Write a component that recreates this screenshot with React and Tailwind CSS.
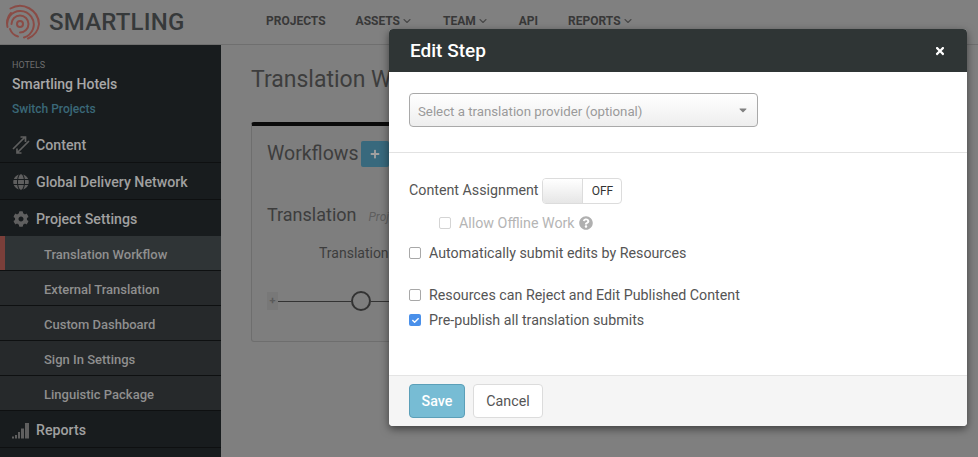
import React from 'react';
import { ChevronDown } from 'lucide-react';
import { FaCog, FaGlobe, FaQuestionCircle, FaTimes, FaCheck, FaPlus, FaCaretDown } from 'react-icons/fa';

const font = { fontFamily: 'Roboto, "Liberation Sans", sans-serif' };

function Logo() {
  return (
    <svg width="38" height="38" viewBox="5 3 38 38" fill="none" stroke="#8a4c46" strokeWidth="2" strokeLinecap="round">
      <circle cx="20" cy="24" r="3" />
      <path d="M11.500 24A8.500 8.500 0 1 1 20 32.500" />
      <path d="M7.500 27A13 13 0 0 1 20 11A13.500 13.500 0 0 1 33 29A14 14 0 0 1 24 37.500" />
      <path d="M10 29A12 12 0 0 0 18 36.500" />
      <path d="M10.500 8.500A19 19 0 0 1 39 24A18 18 0 0 1 28 38.500" />
      <path d="M7 23A16 16 0 0 1 11 13" />
    </svg>
  );
}

function TransferIcon() {
  return (
    <svg width="18" height="18" viewBox="0 0 18 18" fill="none" stroke="#5f5f5f" strokeWidth="1.700">
      <path d="M1 13 L13 1 M8.500 1 H13.500 V6" />
      <path d="M17 5 L5 17 M5 12.500 V17 H9.500" />
    </svg>
  );
}

function BarsIcon() {
  return (
    <svg width="18" height="17" viewBox="0 0 18 17" fill="#5f5f5f">
      <rect x="0" y="14.500" width="2" height="2" />
      <rect x="3" y="13" width="2" height="3.500" />
      <rect x="6" y="10" width="2" height="6.500" />
      <rect x="9" y="6.500" width="3" height="10" />
      <rect x="13" y="1" width="4" height="15.500" />
    </svg>
  );
}

function NavItem({ label, chevron }) {
  return (
    <div className="flex items-center gap-[1px] text-[12px] font-bold text-[#383838]">
      {label}
      {chevron && <ChevronDown size={12} strokeWidth={2.200} className="text-[#484848]" />}
    </div>
  );
}

function MainRow({ icon, label, h }) {
  return (
    <div className={`flex items-center pl-[12px] gap-[6px] border-b border-[#0e1011] text-[14.200px] font-medium text-[#a0a0a0] ${h}`}>
      <div className="w-[18px] flex justify-center">{icon}</div>
      <span className="pt-[2px]">{label}</span>
    </div>
  );
}

function SubRow({ label, active }) {
  return (
    <div className={`flex items-center h-[35px] pl-[44px] pt-[3px] border-b border-[#0e1011] text-[13px] font-medium text-[#8f8f8f] relative ${active ? 'bg-[#2f3436]' : 'bg-[#26292b]'}`}>
      {active && <div className="absolute left-0 top-0 bottom-0 w-[5px] bg-[#7b3f3a]" />}
      {label}
    </div>
  );
}

function Check({ checked, disabled }) {
  if (checked) {
    return (
      <span className="w-[12px] h-[12px] rounded-[2px] bg-[#4a90ea] flex items-center justify-center">
        <FaCheck size={7} className="text-white" />
      </span>
    );
  }
  return (
    <span className={`w-[12px] h-[12px] rounded-[2px] border bg-white ${disabled ? 'border-[#d4d4d4]' : 'border-[#a8a8a8]'}`} />
  );
}

function CheckRow({ label, checked, className }) {
  return (
    <div className={`flex items-center gap-[8px] text-[14.250px] text-[#555] h-[20px] ${className || ''}`}>
      <Check checked={checked} />
      <span className="pt-[2px]">{label}</span>
    </div>
  );
}

export default function App() {
  return (
    <div className="relative w-[978px] h-[457px] overflow-hidden bg-[#7f7f7f]" style={font}>
      <header className="h-[45px] flex items-center bg-[#808080] border-b border-[#6f6f6f]">
        <div className="w-[266px] flex items-center pl-[5px] gap-[6px]">
          <Logo />
          <span className="text-[24px] font-medium tracking-[0.2px] text-[#36393a]">SMARTLING</span>
        </div>
        <nav className="flex items-center gap-[30px] pb-[3px]">
          <NavItem label="PROJECTS" />
          <NavItem label="ASSETS" chevron />
          <NavItem label="TEAM" chevron />
          <NavItem label="API" />
          <NavItem label="REPORTS" chevron />
        </nav>
      </header>

      <div className="flex h-[412px]">
        <aside className="w-[221px] shrink-0 bg-[#181c1e]">
          <div className="h-[83px] pl-[12px] pt-[15px]">
            <div className="text-[9px] leading-[11px] text-[#6e6e6e]">HOTELS</div>
            <div className="text-[14px] leading-[20px] mt-[3px] font-medium text-[#a8a8a8]">Smartling Hotels</div>
            <div className="text-[12px] leading-[16px] mt-[7px] font-medium text-[#3a6878]">Switch Projects</div>
          </div>
          <MainRow icon={<TransferIcon />} label="Content" h="h-[35px]" />
          <MainRow icon={<FaGlobe size={16} className="text-[#5f5f5f]" />} label="Global Delivery Network" h="h-[37px] pt-[2px]" />
          <div className="flex items-center h-[36px] pl-[12px] pt-[2px] gap-[6px] text-[14.200px] font-medium text-[#a0a0a0]">
            <div className="w-[18px] flex justify-center"><FaCog size={16} className="text-[#5f5f5f]" /></div>
            <span className="pt-[2px]">Project Settings</span>
          </div>
          <SubRow label="Translation Workflow" active />
          <SubRow label="External Translation" />
          <SubRow label="Custom Dashboard" />
          <SubRow label="Sign In Settings" />
          <SubRow label="Linguistic Package" />
          <MainRow icon={<BarsIcon />} label="Reports" h="h-[37px] pt-[2px]" />
        </aside>

        <main className="flex-1 pl-[30px] pr-[20px] pt-[21px]">
          <h1 className="text-[23px] leading-[28px] text-[#3d3d3d]">Translation Workflow</h1>
          <section className="mt-[28px] h-[220px] rounded-[3px] border-t-[4px] border-t-[#0a0a0a] border-x border-b border-x-[#6e6e6e] border-b-[#6e6e6e] bg-[#7e7e7e] pl-[15px] pt-[14px]">
            <div className="flex items-center gap-[2px]">
              <span className="text-[19.500px] leading-[28px] text-[#3d3d3d]">Workflows</span>
              <span className="w-[28px] h-[26px] rounded-[2px] bg-[#38697d] flex items-center justify-center">
                <FaPlus size={10} className="text-[#a0a0a0]" />
              </span>
            </div>
            <div className="flex items-baseline gap-[12px] mt-[33px]">
              <span className="text-[18px] leading-[28px] text-[#3d3d3d]">Translation</span>
              <span className="text-[12px] italic text-[#5f5f5f]">Project</span>
            </div>
            <div className="text-[14px] leading-[20px] text-[#3d3d3d] mt-[14px] pl-[52px]">Translation</div>
            <div className="flex items-center mt-[28px]">
              <span className="w-[11px] h-[18px] bg-[#787878] text-[11px] leading-[18px] text-center font-bold text-[#5a5a5a]">+</span>
              <span className="w-[73px] h-px bg-[#333]" />
              <span className="w-[20px] h-[20px] rounded-full border-2 border-[#333] shrink-0" />
              <span className="w-[40px] h-px bg-[#333]" />
            </div>
          </section>
        </main>
      </div>

      <div className="absolute left-[389px] top-[29px] w-[578px] h-[397px] rounded-[4px] bg-white shadow-[0_3px_9px_rgba(0,0,0,0.5)] flex flex-col overflow-hidden">
        <div className="h-[43px] shrink-0 bg-[#2f3535] flex items-center justify-between pl-[21px] pr-[21px]">
          <span className="text-[19px] font-medium text-white pt-[1px]">Edit Step</span>
          <FaTimes size={12} className="text-white" />
        </div>

        <div className="h-[81px] shrink-0 pt-[21px] pl-[20px] border-b border-[#e2e2e2]">
          <div className="w-[349px] h-[34px] rounded-[4px] border border-[#a9a9a9] bg-gradient-to-b from-white to-[#eeeeee] flex items-center justify-between pl-[8px] pr-[8px]">
            <span className="text-[13.250px] text-[#9a9a9a] pt-[3px]">Select a translation provider (optional)</span>
            <FaCaretDown size={12} className="text-[#808080]" />
          </div>
        </div>

        <div className="flex-1 pl-[20px] pt-[25px]">
          <div className="flex items-center gap-[4px] text-[14.250px] text-[#555] h-[26px]">
            <span>Content Assignment</span>
            <div className="w-[80px] h-[26px] rounded-[4px] border border-[#dcdcdc] flex overflow-hidden">
              <span className="w-[40px] bg-gradient-to-b from-white to-[#e6e6e6] border-r border-[#dcdcdc]" />
              <span className="flex-1 text-center text-[12px] leading-[24px] text-[#333]">OFF</span>
            </div>
          </div>
          <div className="flex items-center gap-[8px] pl-[30px] mt-[9px] h-[20px] text-[14.250px] text-[#b5b5b5]">
            <Check disabled />
            <span className="pt-[2px]">Allow Offline Work</span>
            <FaQuestionCircle size={14} className="text-[#b0b0b0] -ml-[4px]" />
          </div>
          <CheckRow className="mt-[10px]" label="Automatically submit edits by Resources" />
          <CheckRow className="mt-[22px]" label="Resources can Reject and Edit Published Content" />
          <CheckRow className="mt-[5px]" label="Pre-publish all translation submits" checked />
        </div>

        <div className="h-[51px] shrink-0 bg-[#f5f5f5] border-t border-[#e4e4e4] flex items-start gap-[8px] pl-[20px] pt-[8px]">
          <button className="w-[56px] h-[34px] rounded-[4px] border border-[#5b9fb8] bg-[#77bcd4] pt-[2px] text-[14.250px] font-medium text-white">Save</button>
          <button className="w-[70px] h-[34px] rounded-[4px] border border-[#dcdcdc] bg-white pt-[2px] text-[14.250px] text-[#555]">Cancel</button>
        </div>
      </div>
    </div>
  );
}
